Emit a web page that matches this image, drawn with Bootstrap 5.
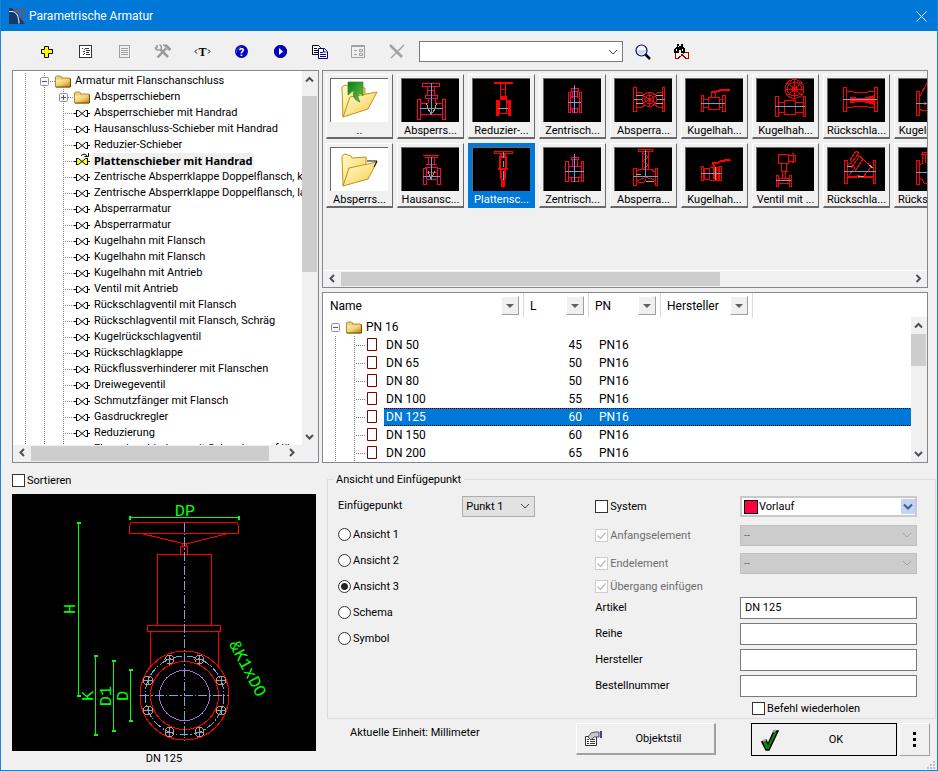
<!DOCTYPE html>
<html lang="de">
<head>
<meta charset="utf-8">
<meta name="viewport" content="width=device-width, initial-scale=1">
<title>Parametrische Armatur</title>
<link href="https://cdn.jsdelivr.net/npm/bootstrap@5.3.0/dist/css/bootstrap.min.css" rel="stylesheet">
<style>
  :root { --face: #f0f0f0; --accent: #0078d7; --thumb: #cdcdcd; --line: #828790; }
  body { font-family: Roboto, "Noto Sans", sans-serif; font-size: 11px; line-height: 16px; color: #000; background: var(--face); }
  button, input, select { font: inherit; color: inherit; }
  .window { border: 1px solid #1883d7; border-top: 0; background: var(--face); }
  .titlebar { height: 31px; background: var(--accent); font-size: 12px; padding: 0 0 0 8px; }
  .close-btn { width: 31px; height: 31px; padding: 0; border: 0; background: none; }
  .tool-row { height: 39px; padding-left: 26px; padding-top: 2px; }
  .tool-btn { width: 39px; height: 24px; padding: 0; border: 0; background: none; display: flex; align-items: center; justify-content: center; }
  .search-box { width: 204px; margin-left: 2px; }
  .form-select.win { height: 21px; padding: 0 20px 0 3px; font-size: 11px; line-height: 19px; color: #000; border: 1px solid #adadad; border-radius: 0; background-color: #e1e1e1;
    background-image: url("data:image/svg+xml,%3Csvg xmlns='http://www.w3.org/2000/svg' viewBox='0 0 10 10'%3E%3Cpath d='M1 3l4 4 4-4' fill='none' stroke='%23444'/%3E%3C/svg%3E"); background-size: 10px 10px; background-position: right 4px center; }
  .form-select.win.plain { background-color: #fff; border-color: #7a7a7a; }
  .form-select.win.point { width: 73px; }
  .form-select.win:disabled { background-color: #ccc; border-color: #bfbfbf; color: #6d6d6d;
    background-image: url("data:image/svg+xml,%3Csvg xmlns='http://www.w3.org/2000/svg' viewBox='0 0 10 10'%3E%3Cpath d='M1 3l4 4 4-4' fill='none' stroke='%23a0a0a0'/%3E%3C/svg%3E"); }
  .form-select.win.system { background-color: #fff; border: 2px solid #c9c9c9; padding-left: 17px; line-height: 17px; background-size: 14px 15px; background-position: right 0 center;
    background-image: url("data:image/svg+xml,%3Csvg xmlns='http://www.w3.org/2000/svg' viewBox='0 0 14 15'%3E%3Crect width='14' height='15' rx='1' fill='%23c1d3fb'/%3E%3Cpath d='M3 5.500l4 4 4-4' fill='none' stroke='%234d6185' stroke-width='2.200'/%3E%3C/svg%3E"); }
  .swatch { position: absolute; left: 4px; top: 4px; width: 14px; height: 14px; background: #ff0040; border: 1px solid #000; }
  .body-grid { display: grid; grid-template-columns: minmax(0, 1fr) minmax(0, 2fr); column-gap: 3px; padding-left: 11px; padding-right: 1px; min-height: 0; }
  .body-grid > section { min-height: 0; }
  .sunk { border: 1px solid var(--line); background: #fff; }
  .sunk.faced { background: var(--face); }

  /* scroll bars */
  .bar-v { width: 16px; background: var(--face); display: flex; flex-direction: column; }
  .bar-h { height: 17px; background: var(--face); display: flex; }
  .bar-v > i, .bar-h > i { background: var(--thumb); background-clip: content-box; }
  .bar-v > i { padding-right: 1px; }
  .bar-h > i { padding: 1px 0; }
  .bar-v > svg, .bar-h > svg { flex: none; }
  .chev { fill: none; stroke: #505050; stroke-width: 2; }

  /* navigation tree */
  .tree { list-style: none; margin: 0; padding: 2px 0 0; }
  .tree li { --dots-v: repeating-linear-gradient(#808080 0 1px, transparent 1px 2px); --dots-h: repeating-linear-gradient(90deg, #808080 0 1px, transparent 1px 2px);
    height: 16px; display: flex; align-items: center; white-space: nowrap; background-repeat: no-repeat; padding-left: 61px;
    background-image: var(--dots-v), var(--dots-v), var(--dots-v), var(--dots-h);
    background-size: 1px 100%, 1px 100%, 1px 100%, 9px 1px;
    background-position: 12px 0, 31px 0, 50px 0, 52px 8px; }
  .tree li.top { padding-left: 27px; background-size: 1px 100%, 1px 100%, 0 0, 5px 1px; background-position: 12px 0, 31px 0, 0 0, 37px 8px; }
  .tree li.sub { padding-left: 46px; background-position: 12px 0, 31px 0, 50px 0, 55px 8px; background-size: 1px 100%, 1px 100%, 1px 100%, 5px 1px; }
  .tree svg { flex: none; margin-right: 4px; }
  svg.twist, .tree svg.twist { margin-right: 6px; }
  .tree .current { font-family: "Noto Sans", sans-serif; font-weight: 700; background: #f0f0f0; padding: 0 2px; margin-left: -2px; height: 16px; }
  .sort-row { height: 31px; padding-top: 3px; }
  .preview { margin: 0 3px 3px 0; }

  /* preview tiles */
  .gallery { display: grid; grid-auto-flow: column; grid-template-rows: 65px 65px; grid-auto-columns: 67px; gap: 4px; padding: 3px 3px 62px; overflow: hidden; }
  .tile { border: 1px solid; border-width: 1px 1px 2px 1px; border-color: #fff #696969 #696969 #fff; background: var(--face); padding: 3px; text-align: center; white-space: nowrap; line-height: 15px; }
  .tile svg { display: block; width: 58px; height: 44px; background: #000; border-top: 1px solid #696969; border-left: 1px solid #696969; fill: none; stroke: #f00; margin-bottom: 1px; shape-rendering: crispEdges; }
  .tile svg.light { background: #fff; shape-rendering: auto; }
  .tile .crim { stroke: #ff0040; } .tile .axis { stroke: #6f9fd8; } .tile .tan { stroke: #d0a060; } .tile .solid { fill: #f00; }
  .tile.picked { background: var(--accent); border-color: var(--accent); color: #fff; }

  /* dimension table */
  .table-side { padding-left: 1px; }
  .sizes { width: 100%; table-layout: fixed; border-collapse: separate; border-spacing: 0; font-size: 12px; line-height: 16px; }
  .sizes th { height: 25px; font-weight: 400; padding: 0 4px 0 6px; border-right: 1px solid #dcdcdc; }
  .sizes th:last-child { border: 0; }
  .sizes td { height: 18px; padding: 0; }
  .sizes td.num { text-align: right; padding-right: 7px; }
  .sizes td.pn { padding-left: 10px; }
  .drop { width: 18px; height: 19px; padding: 0; border: 1px solid; border-color: #fff #a0a0a0 #a0a0a0 #fff; background: #f0f0f0; display: flex; align-items: center; justify-content: center; }
  .root-row { padding-left: 7px; }
  .twig { height: 18px; padding-left: 42px; display: flex; align-items: center; background-repeat: no-repeat;
    background-image: repeating-linear-gradient(#808080 0 1px, transparent 1px 2px), repeating-linear-gradient(#808080 0 1px, transparent 1px 2px), repeating-linear-gradient(90deg, #808080 0 1px, transparent 1px 2px);
    background-size: 1px 18px, 1px 18px, 10px 1px; background-position: 11px 0, 30px 0, 32px 9px; }
  .twig svg { flex: none; margin-right: 6px; }
  .twig span { flex: 1; padding-left: 2px; line-height: 18px; }
  .sizes .marked td, .sizes .marked .twig span { color: #fff; }
  .sizes .marked .twig span, .sizes .marked td + td { background: linear-gradient(90deg, #000 50%, transparent 0) 0 0/2px 1px repeat-x, linear-gradient(90deg, #000 50%, transparent 0) 0 100%/2px 1px repeat-x, var(--accent); }

  /* form */
  .group { border: 1px solid #dcdcdc; margin: 0 0 0 5px; padding: 11px 18px 1px 10px; position: relative; }
  .group > legend { position: absolute; top: -8px; left: 5px; width: auto; font-size: 11px; line-height: 16px; margin: 0; padding: 0 3px; background: var(--face); float: none; }
  .options { grid-template-rows: 30px; grid-auto-rows: 26px; display: grid; align-items: center; padding-right: 44px; }
  .fields { display: grid; grid-template-columns: 45% 55%; grid-template-rows: 30px 28px 28px 18px repeat(4, 26px) 18px; align-items: center; }
  .tick { display: flex; align-items: center; gap: 2px; }
  .tick label { padding-top: 1px; }
  .tick .form-check-input { width: 13px; height: 13px; margin: 0; border: 1px solid #333; border-radius: 0; background-color: #fff; box-shadow: none; flex: none; }
  .tick .form-check-input[type=radio] { border-radius: 50%; }
  .tick .form-check-input[type=radio]:checked { background-image: radial-gradient(circle, #222 0 3px, transparent 4px); }
  .tick .form-check-input:disabled { opacity: 1; border-color: #ccc; }
  .tick .form-check-input:disabled:checked { background-image: url("data:image/svg+xml,%3Csvg xmlns='http://www.w3.org/2000/svg' viewBox='0 0 11 11'%3E%3Cpath d='M1.500 5.500l3 3 5-6' fill='none' stroke='%23bbb' stroke-width='1.300'/%3E%3C/svg%3E"); }
  .tick .form-check-input:disabled ~ label { color: #6d6d6d; opacity: 1; }
  .form-control.win { height: 22px; border: 1px solid #7a7a7a; border-radius: 0; padding: 0 4px 1px; font-size: 11px; line-height: 16px; background: #fff; color: #000; }
  .unit { line-height: 20px; padding-left: 28px; }
  .win-btn { height: 32px; border: 1px solid; border-width: 1px 2px 2px 1px; border-color: #fff #a0a0a0 #a0a0a0 #fff; background: var(--face); padding: 0; display: flex; align-items: center; }
  .win-btn.style-btn { width: 140px; margin-right: 35px; }
  .win-btn.default { width: 146px; border: 1px solid #000; height: 33px; margin-right: 2px; }
  .win-btn.more { width: 31px; height: 33px; border-width: 1px; margin-right: 6px; }

  .drawing { display: block; width: 100%; max-height: 40vh; background: #000; fill: none; shape-rendering: crispEdges; }
  .drawing text { fill: #0f0; stroke: none; font-family: "Liberation Mono", monospace; font-size: 17px; text-anchor: middle; }
</style>
</head>
<body>
<svg width="0" height="0" class="position-absolute" aria-hidden="true">
  <defs>
    <linearGradient id="fold" x1="0" y1="0" x2="1" y2="1"><stop offset="0" stop-color="#fff0b0"/><stop offset=".5" stop-color="#f0cf70"/><stop offset="1" stop-color="#b87a08"/></linearGradient>
    <linearGradient id="bigfold" x1="0" y1="0" x2="1" y2="1"><stop offset="0" stop-color="#fffbd0"/><stop offset="1" stop-color="#f7cd4a"/></linearGradient>
    <linearGradient id="leafgreen" x1="0" y1="0" x2="1" y2="1"><stop offset="0" stop-color="#0d7a1c"/><stop offset="1" stop-color="#6cc644"/></linearGradient>
    <symbol id="valve" viewBox="0 1 16 16"><path d="M0 9.500h2M14 9.500h2M2.500 6v7M2.500 6.500h2l7 6h2v-6h-2l-7 6h-2M13.500 6v7" fill="none" stroke="#000"/></symbol>
    <symbol id="valve-on" viewBox="0 1 16 16"><path d="M2.500 6.500h2l4 3-4 3h-2zM13.500 6.500h-2l-3 3 3 3h2z" fill="#ff0"/><path d="M0 9.500h2M14 9.500h2M2.500 6v7M2.500 6.500h2l7 6h2v-6h-2l-7 6h-2M13.500 6v7M7 3.500q3-3 6 0M14.500 1v3.500h-4" fill="none" stroke="#000"/></symbol>
    <symbol id="folder" viewBox="0 0 16 12"><path d="M.5 11.500V1.500l1-1h4l1 1v1h8v9z" fill="#e9cf84" stroke="#b58a2a"/><path d="M1 4h14v7.500H1z" fill="url(#fold)"/><path d="M15.500 3v8.500H1" fill="none" stroke="#6e4a00"/></symbol>
    <symbol id="minus" viewBox="0 0 9 9"><rect x=".5" y=".5" width="8" height="8" rx="1" fill="#f6f6f6" stroke="#919191"/><path d="M2 4.500h5" stroke="#3c58b0"/></symbol>
    <symbol id="plus" viewBox="0 0 9 9"><rect x=".5" y=".5" width="8" height="8" rx="1" fill="#f6f6f6" stroke="#919191"/><path d="M2 4.500h5M4.500 2v5" stroke="#3c58b0"/></symbol>
    <symbol id="up" viewBox="0 0 16 16"><path class="chev" d="M4 10l3.500-3.500L11 10"/></symbol>
    <symbol id="down" viewBox="0 0 16 16"><path class="chev" d="M4 6.500l3.500 3.500L11 6.500"/></symbol>
    <symbol id="left" viewBox="0 0 16 16"><path class="chev" d="M10 4L6.500 7.500l3.500 3.500"/></symbol>
    <symbol id="right" viewBox="0 0 16 16"><path class="chev" d="M6 4l3.500 3.500L6 11"/></symbol>
    <symbol id="page" viewBox="0 0 12 14"><path d="M1.500.500h9v12h-9z" fill="#fff" stroke="#800000"/></symbol>
    <symbol id="caret" viewBox="0 0 8 4"><path d="M0 0h8L4 4z" fill="#606060"/></symbol>
  </defs>
</svg>

<div class="window vh-100 d-flex flex-column overflow-hidden">
  <header class="titlebar d-flex align-items-center text-white flex-shrink-0">
    <svg width="16" height="16" viewBox="0 0 16 16"><rect width="16" height="16" fill="#123a6c"/><path d="M3 0h13v16z" fill="#3a669a"/><path d="M0 3.500h3c4 0 7 5 7 12" fill="none" stroke="#fff"/></svg>
    <span class="ps-1">Parametrische Armatur</span>
    <button class="close-btn ms-auto" aria-label="Schließen"><svg width="11" height="11" viewBox="0 0 11 11"><path d="M.5.500l10 10M10.500.500l-10 10" stroke="#fff"/></svg></button>
  </header>

  <div class="tool-row d-flex align-items-center flex-shrink-0">
    <button class="tool-btn" aria-label="Neu"><svg width="12" height="12"><path d="M3.500.500h4v3h4v4h-4v4h-4v-4h-3v-4h3z" fill="#ff0" stroke="#000"/></svg></button>
    <button class="tool-btn" aria-label="Baum"><svg width="13" height="13" fill="none" stroke="#333"><rect x=".5" y=".5" width="12" height="12" fill="#fff"/><path d="M3 3.500h2M4 6.500h1M4 9.500h1M5.500 4v6" stroke-dasharray="1 1"/><path d="M6 3.500h4M7 5.500h4M7 7.500h3M7 9.500h4"/></svg></button>
    <button class="tool-btn" aria-label="Liste"><svg width="12" height="13" fill="none" stroke="#a0a0a0"><rect x=".5" y=".5" width="10" height="12"/><path d="M2 3.500h7M2 5.500h7M2 7.500h7M2 9.500h7"/><path d="M11.500 1v12" stroke="#fff"/></svg></button>
    <button class="tool-btn" aria-label="Werkzeuge"><svg width="17" height="15" viewBox="0 0 17 15" fill="none" stroke="#999"><path d="M2.500 13.500L11 4.500M13 13L5.500 5.500" stroke-width="2.500"/><path d="M8 1h4l4 4-2 1.500-5-5z" fill="#999" stroke-width="1"/><path d="M2 1v2.500h-2c1 3 4 3 5.500 2s1-4-1-5" stroke-width="1.500"/></svg></button>
    <button class="tool-btn" aria-label="Text"><svg width="17" height="13"><path d="M3 4.500l-2 2 2 2M14 4.500l2 2-2 2" fill="none" stroke="#000"/><text x="8.500" y="11" text-anchor="middle" font-family="Liberation Serif, serif" font-weight="700" font-size="12">T</text></svg></button>
    <button class="tool-btn" aria-label="Hilfe"><svg width="13" height="13"><circle cx="6.500" cy="6.500" r="6.500" fill="#0000b8"/><path d="M1.500 8a5 5 0 0 1 5-6" stroke="#55f" fill="none"/><text x="6.500" y="10.500" text-anchor="middle" font-weight="700" font-size="11" fill="#fff">?</text></svg></button>
    <button class="tool-btn" aria-label="Start"><svg width="13" height="13"><circle cx="6.500" cy="6.500" r="6.500" fill="#0000d0"/><circle cx="6.500" cy="6.500" r="6" fill="none" stroke="#000070"/><path d="M5 3l4 3.500L5 10z" fill="#fff"/></svg></button>
    <button class="tool-btn" aria-label="Kopieren"><svg width="16" height="14"><path d="M.5.500h6l2 2v7h-8z" fill="#fff" stroke="#000"/><path d="M2 3.500h3M2 5.500h4M2 7.500h4" stroke="#000"/><path d="M6.500 3.500h6l3 3v7h-9z" fill="#fff" stroke="#000080"/><path d="M8 7.500h3M8 9.500h6M8 11.500h6M11.500 4v3h3" stroke="#000080" fill="none"/></svg></button>
    <button class="tool-btn" aria-label="Eigenschaften"><svg width="15" height="13" fill="none" stroke="#a0a0a0"><path d="M.5.500h13v12H.5zM1 1.500h12"/><path d="M3 5.500h3M3 9.500h3M8.500 4.500h3v2h-3zM8.500 8.500h3v2h-3z"/></svg></button>
    <button class="tool-btn" aria-label="Löschen"><svg width="17" height="15" fill="none" stroke="#a0a0a0"><path d="M1 1l12 12" stroke-width="2.500"/><path d="M15 1L2 14" stroke-width="1.500"/><path d="M14 14l2-1" stroke="#fff"/></svg></button>
    <select class="form-select win plain search-box" aria-label="Suche"><option></option></select>
    <button class="tool-btn" aria-label="Suchen"><svg width="16" height="16"><path d="M10 10l5 5" stroke="#000" stroke-width="2.500"/><circle cx="6.500" cy="6.500" r="5.500" fill="#fff" stroke="#000080" stroke-width="1.200"/><path d="M2 6a4.500 4.500 0 0 0 9 0z" fill="#cfd8e4"/></svg></button>
    <button class="tool-btn" aria-label="Armatur suchen"><svg width="16" height="15" shape-rendering="crispEdges"><path d="M1.500 9v5h3l7-6h3v6h-3l-4-4" fill="none" stroke="#a00000"/><path d="M3 0h2v2h2V0h2v2l2 3v4H7V6H5v3H0V5l3-3z"/><path d="M2.500 5v2M8.500 5v2M4.500 2v1" stroke="#fff"/></svg></button>
  </div>

  <main class="body-grid flex-grow-1">
    <section class="d-flex flex-column">
      <div class="sunk d-flex flex-column flex-grow-1 overflow-hidden">
        <div class="d-flex flex-grow-1 overflow-hidden">
          <ul class="tree flex-grow-1 overflow-hidden">
            <li class="top"><svg width="9" height="9" class="twist"><use href="#minus"/></svg><svg width="16" height="13"><use href="#folder"/></svg>Armatur mit Flanschanschluss</li>
            <li class="sub"><svg width="9" height="9" class="twist"><use href="#plus"/></svg><svg width="16" height="13"><use href="#folder"/></svg>Absperrschiebern</li>
            <li><svg width="16" height="16"><use href="#valve"/></svg>Absperrschieber mit Handrad</li>
            <li><svg width="16" height="16"><use href="#valve"/></svg>Hausanschluss-Schieber mit Handrad</li>
            <li><svg width="16" height="16"><use href="#valve"/></svg>Reduzier-Schieber</li>
            <li><svg width="16" height="16"><use href="#valve-on"/></svg><span class="current">Plattenschieber mit Handrad</span></li>
            <li><svg width="16" height="16"><use href="#valve"/></svg>Zentrische Absperrklappe Doppelflansch, kurz</li>
            <li><svg width="16" height="16"><use href="#valve"/></svg>Zentrische Absperrklappe Doppelflansch, lang</li>
            <li><svg width="16" height="16"><use href="#valve"/></svg>Absperrarmatur</li>
            <li><svg width="16" height="16"><use href="#valve"/></svg>Absperrarmatur</li>
            <li><svg width="16" height="16"><use href="#valve"/></svg>Kugelhahn mit Flansch</li>
            <li><svg width="16" height="16"><use href="#valve"/></svg>Kugelhahn mit Flansch</li>
            <li><svg width="16" height="16"><use href="#valve"/></svg>Kugelhahn mit Antrieb</li>
            <li><svg width="16" height="16"><use href="#valve"/></svg>Ventil mit Antrieb</li>
            <li><svg width="16" height="16"><use href="#valve"/></svg>Rückschlagventil mit Flansch</li>
            <li><svg width="16" height="16"><use href="#valve"/></svg>Rückschlagventil mit Flansch, Schräg</li>
            <li><svg width="16" height="16"><use href="#valve"/></svg>Kugelrückschlagventil</li>
            <li><svg width="16" height="16"><use href="#valve"/></svg>Rückschlagklappe</li>
            <li><svg width="16" height="16"><use href="#valve"/></svg>Rückflussverhinderer mit Flanschen</li>
            <li><svg width="16" height="16"><use href="#valve"/></svg>Dreiwegeventil</li>
            <li><svg width="16" height="16"><use href="#valve"/></svg>Schmutzfänger mit Flansch</li>
            <li><svg width="16" height="16"><use href="#valve"/></svg>Gasdruckregler</li>
            <li><svg width="16" height="16"><use href="#valve"/></svg>Reduzierung</li>
            <li><svg width="16" height="16"><use href="#valve"/></svg>Flanschverbindung mit Schrauben auf längf</li>
          </ul>
          <div class="bar-v flex-shrink-0" aria-hidden="true"><svg width="16" height="17"><use href="#up"/></svg><i class="mt-2" style="height:47%"></i><svg class="mt-auto" width="16" height="17"><use href="#down"/></svg></div>
        </div>
        <div class="bar-h flex-shrink-0" aria-hidden="true"><svg width="18" height="16"><use href="#left"/></svg><i style="width:78%"></i><svg class="ms-auto me-3" width="20" height="16"><use href="#right"/></svg></div>
      </div>
      <div class="tick sort-row flex-shrink-0"><input class="form-check-input" type="checkbox" id="sort"><label for="sort">Sortieren</label></div>
      <figure class="preview flex-shrink-0">
        <svg class="drawing" viewBox="0 0 304 257" role="img" aria-label="Plattenschieber, Ansicht 3">
          <g stroke="#f00">
            <path d="M119.500 28.500h105l2 3v8h-109v-8zM131 40l40 9.500h5l38-9.500M170 50v2M174.500 50v2M168.500 60.500v-8h7v8M145.500 131.500v-71h54v71M135.500 131.500h73v6h-73zM138.500 137.500v35M206.500 137.500v35"/>
            <circle cx="172.500" cy="201.500" r="44.500"/><circle cx="172.500" cy="201.500" r="34"/>
          </g>
          <circle cx="172.500" cy="201.500" r="25" stroke="#a070d8"/>
          <g stroke="#6fa8dc" stroke-dasharray="9 2 1.500 2">
            <circle cx="172.500" cy="201.500" r="39.500"/><path d="M172.500 28.500v218M128 201.500h89"/>
          </g>
          <g stroke="#d8945a">
            <circle cx="187.500" cy="165.500" r="4.500"/><circle cx="209" cy="186.500" r="4.500"/><circle cx="209" cy="216.500" r="4.500"/><circle cx="187.500" cy="238" r="4.500"/>
            <circle cx="157.500" cy="165.500" r="4.500"/><circle cx="136" cy="186.500" r="4.500"/><circle cx="136" cy="216.500" r="4.500"/><circle cx="157.500" cy="238" r="4.500"/>
          </g>
          <path stroke="#6fa8dc" d="M184 165.500h7M187.500 162v7M205 186.500h8M209 183v7M205 216.500h8M209 213v7M184 238h7M187.500 234v8M154 165.500h7M157.500 162v7M132 186.500h8M136 183v7M132 216.500h8M136 213v7M154 238h7M157.500 234v8"/>
          <g stroke="#0f0">
            <path d="M117.500 23.500h109M66.500 28v174M83.500 162v79M101.500 167v70M118.500 176v51"/>
            <path stroke-width="2" d="M117.500 22v4M226.500 22v4M64.500 28.500h4M64.500 201.500h4M81.500 162h4M81.500 241h4M99.500 167h4M99.500 237h4M116.500 176h4M116.500 227h4"/>
          </g>
          <text x="173" y="22">DP</text>
          <text transform="translate(63 115) rotate(-90)">H</text>
          <text transform="translate(81 202) rotate(-90)">K</text>
          <text transform="translate(99 202) rotate(-90)">D1</text>
          <text transform="translate(116 202) rotate(-90)">D</text>
          <text transform="translate(231 177) rotate(62)">&amp;K1xDO</text>
        </svg>
        <figcaption class="text-center">DN 125</figcaption>
      </figure>
    </section>

    <section class="d-flex flex-column">
      <div class="sunk faced d-flex flex-column flex-shrink-0 me-2">
        <div class="gallery">
          <button class="tile"><svg class="light" viewBox="1 1 57 43"><path d="M12 9l3-2 6 2 14 1v14L13 39z" fill="url(#bigfold)" stroke="#c0921a"/><path d="M13 39l7-20 27-5-9 17z" fill="url(#bigfold)" stroke="#c0921a"/><path d="M18 4h15v14l-3-3q-4 3 0 9-9-3-6-12l-6 5z" fill="url(#leafgreen)" stroke="#2a8a2a" stroke-width=".7"/></svg>..</button>
          <button class="tile"><svg class="light" viewBox="1 1 57 43"><path d="M12 9l3-2 6 2 1 2 14-1v14L13 39z" fill="url(#bigfold)" stroke="#c0921a"/><path d="M13 39l6-18 28-6-9 17z" fill="url(#bigfold)" stroke="#c0921a"/><path d="M37 14h10l-3 6" fill="none" stroke="#000"/></svg>Absperrs...</button>

          <button class="tile"><svg viewBox="1 1 57 43"><path class="crim" d="M21.500 5.500h17v2.500h-17zM26.500 8v9M33.500 8v9M27 12h6M24.500 17.500h12v2.500h-12zM27 20v5M34 20v5M16.500 21.500h2.500v20h-2.500zM41.500 21.500h2.500v20h-2.500zM19 25.500h8M34 25.500h8M19 36.500h23"/><path class="tan" d="M25.500 25l2 7 3 4 3-4 2-7"/><path class="axis" d="M30.500 5v32M19 30.500h23"/></svg>Absperrs...</button>
          <button class="tile"><svg viewBox="1 1 57 43"><path class="crim" d="M22 8.500h16M24 10h13M27.500 11v7M33.500 11v7M25 17.500h11M24 20.500h13M22.500 21.500h3v16h-3zM36 21.500h3v16h-3zM26 25h10M26 32.500h10"/><path class="tan" d="M27 24l3 8 4-8"/><path class="axis" d="M30.500 10v23M22 29.500h17"/></svg>Hausansc...</button>

          <button class="tile"><svg viewBox="1 1 57 43"><path class="solid" d="M22 4.500h18v1h-18zM28.500 18.500h6v3h-6zM24.500 22h1.500v15h-1.500zM36.500 22h1.500v15h-1.500z"/><path d="M28.500 6v12M33.500 6v12M29 11h4M26 25l3-4h5l2 4M27.500 23v13M34.500 23v13M26 35.500h10"/><path class="axis" d="M26 30.500h10"/></svg>Reduzier-...</button>
          <button class="tile picked"><svg viewBox="1 1 57 43"><path d="M22.500 4.500h18v2h-18z"/><path d="M28 9v13M33.500 9v13M27 9.500h7M29 7v4M33 7v4M25.500 21.500h10M28.500 23v9M33 23v9" stroke-width="2"/><path class="solid" d="M29.500 32h3v7h-3z"/><path class="axis" d="M31 5v6M31 14v6M31 24v9"/></svg>Plattensc...</button>

          <button class="tile"><svg viewBox="1 1 57 43"><path class="crim" d="M25.500 14.500h2v20h-2zM36 14.500h2v20h-2zM28 10.500h7v3h-7zM29 14v6M34 14v6M28 18.500h7M28 30.500h7M29 30v4h5v-4"/><path class="axis" d="M31.500 7v28M25 24.500h13"/></svg>Zentrisch...</button>
          <button class="tile"><svg viewBox="1 1 57 43"><path class="crim" d="M22.500 14.500h2.500v20h-2.500zM38 14.500h2.500v20h-2.500zM28 10.500h7v2h-7zM29 13v6M34 13v6M25 19.500h13M25 30.500h13M28 31v3h7v-3"/><path class="axis" d="M31.500 7v28M22 24.500h19"/></svg>Zentrisch...</button>

          <button class="tile"><svg viewBox="1 1 57 43"><path d="M19.500 9.500h3v24h-3zM48 9.500h2.500v24h-2.500zM23 14h4l3 3M48 14h-4l-3 3M23 29h5l3-2M48 29h-4l-3-2M35.500 14v15M29 18l13 7M29 25l13-7"/><circle cx="35.500" cy="21.500" r="7"/><circle cx="35.500" cy="21.500" r="4.500"/><path class="tan" d="M22 17l7 1M22 26l7-1M49 17l-7 1M49 26l-7-1"/><path class="axis" d="M20 21.500h8M43 21.500h8"/></svg>Absperra...</button>
          <button class="tile"><svg viewBox="1 1 57 43"><path d="M24.500 2.500h14v2h-14zM28.500 5v18M34.500 5v18M28 6l7 4-7 4 7 4-7 4M26 22.500h11M19.500 21.500h2.500v17h-2.500zM41 21.500h2.500v17h-2.500zM22 25l4-3M22 35q10-8 20-1M37 22l4 3M24 35q6 3 8-3"/><path class="tan" d="M32 35l8-1M22 27h5"/><path class="axis" d="M31.500 3v27M19 29.500h25"/></svg>Absperra...</button>

          <button class="tile"><svg viewBox="1 1 57 43"><path d="M16.500 17.500h2v16h-2zM37.500 17.500h2.500v16h-2.500zM19 21.500h4v-2h11v2h4M19 29.500h4v2h11v-2h4M23 20v11M34 20v11M26.500 20v-6h4v6"/><path d="M26 13.500h6l5-2h8" stroke-width="2"/><path class="axis" d="M16 25.500h24"/></svg>Kugelhah...</button>
          <button class="tile"><svg viewBox="1 1 57 43"><path d="M16.500 19.500h2v14h-2zM34 19.500h2v14h-2zM19 21.500h5v11h-5zM25 20h8v13h-8M28 20l1-5"/><path d="M29 32V18M31 33V20M27.500 18v-2h4l5-2 9-1.500" stroke-width="2"/><path class="tan" d="M30.500 20v13"/><path class="axis" d="M16 26.500h20"/></svg>Kugelhah...</button>

          <button class="tile"><svg viewBox="1 1 57 43"><circle cx="38.500" cy="11" r="9.500"/><circle cx="38.500" cy="11" r="7"/><circle cx="38.500" cy="11" r="2"/><path d="M38.500 2v18M30 11h17M32 5l13 12M45 5L32 17M19.500 18.500h2.500v20h-2.500zM47 18.500h2.500v20h-2.500zM22 24h6v-2h11v2h8M22 34h6v2h11v-2h8M28.500 22v14M39.500 22v14"/><path class="axis" d="M19 28.500h30"/></svg>Kugelhah...</button>
          <button class="tile"><svg viewBox="1 1 57 43"><path d="M22.500 7.500h10v9h-10zM33 8.500h6v6h-6M35.500 6.500h2v9h-2M25.500 17v7h5v-7M24.500 24.500h7M26.500 25v6M29.500 25v6M20.500 28.500h2v11h-2zM33.500 28.500h2v11h-2zM23 31h10M23 36.500h10"/><path class="axis" d="M20 33.500h15"/></svg>Ventil mit ...</button>

          <button class="tile"><svg viewBox="1 1 57 43"><path d="M16.500 9.500h3v24h-3zM47.500 9.500h3v24h-3zM20 13q14 3 27 0M20 30q14-3 27 0"/><path class="solid" d="M23 19l11 2 12-3v8l-12-3-11 2z"/><path class="axis" d="M16 21.500h34"/></svg>Rückschla...</button>
          <button class="tile"><svg viewBox="1 1 57 43"><path d="M17.500 13.500h2.500v23h-2.500zM46 13.500h2.500v23h-2.500zM20 18l4-2 4 5-6 7M23 13l6-9 3 2-7 9zM30 7l16 14M32 10l-8 11M36 12l-8 12M20 29l10 0M46 29l-10 0M20 31q13-1 26 0M30 28l6 2 8-10"/><path class="tan" d="M20 19h5M42 18l4 3M31 29h6"/><path class="axis" d="M17 24.500h32"/></svg>Rückschla...</button>

          <button class="tile"><svg viewBox="1 1 57 43"><path d="M18.500 13.500h2.500v24h-2.500zM21 20l8-15M21 31q5 3 14 1M28 5h16M30 5v5"/><circle cx="27" cy="25.500" r="1"/><path class="axis" d="M18 25.500h26"/></svg>Kugelrück...</button>
          <button class="tile"><svg viewBox="1 1 57 43"><path d="M18.500 13.500h2.500v24h-2.500zM24.500 17V5.500h16M23 7.500h16M21 18l4-2M21 31q4 1 5 5h14M27 8v8"/><path class="axis" d="M18 25.500h26"/></svg>Rückschla...</button>
        </div>
        <div class="bar-h border-top border-white" aria-hidden="true"><svg width="18" height="16"><use href="#left"/></svg><i style="width:62.7%"></i><svg class="ms-auto" width="17" height="16"><use href="#right"/></svg></div>
      </div>

      <div class="sunk d-flex mt-1 me-2 flex-shrink-0 overflow-hidden">
        <div class="table-side flex-grow-1">
          <table class="sizes">
            <colgroup><col style="width:200px"><col style="width:65px"><col style="width:72px"><col style="width:92px"><col></colgroup>
            <thead><tr>
              <th><div class="d-flex justify-content-between align-items-center">Name<button class="drop" aria-label="Name filtern"><svg width="8" height="4"><use href="#caret"/></svg></button></div></th>
              <th><div class="d-flex justify-content-between align-items-center">L<button class="drop" aria-label="L filtern"><svg width="8" height="4"><use href="#caret"/></svg></button></div></th>
              <th><div class="d-flex justify-content-between align-items-center">PN<button class="drop" aria-label="PN filtern"><svg width="8" height="4"><use href="#caret"/></svg></button></div></th>
              <th><div class="d-flex justify-content-between align-items-center">Hersteller<button class="drop" aria-label="Hersteller filtern"><svg width="8" height="4"><use href="#caret"/></svg></button></div></th>
              <th></th>
            </tr></thead>
            <tbody>
              <tr><td colspan="5"><div class="root-row d-flex align-items-center"><svg width="9" height="9" class="twist"><use href="#minus"/></svg><svg width="16" height="13" class="me-1"><use href="#folder"/></svg><span>PN 16</span></div></td></tr>
              <tr><td><div class="twig"><svg width="12" height="14"><use href="#page"/></svg><span>DN 50</span></div></td><td class="num">45</td><td class="pn">PN16</td><td></td><td></td></tr>
              <tr><td><div class="twig"><svg width="12" height="14"><use href="#page"/></svg><span>DN 65</span></div></td><td class="num">50</td><td class="pn">PN16</td><td></td><td></td></tr>
              <tr><td><div class="twig"><svg width="12" height="14"><use href="#page"/></svg><span>DN 80</span></div></td><td class="num">50</td><td class="pn">PN16</td><td></td><td></td></tr>
              <tr><td><div class="twig"><svg width="12" height="14"><use href="#page"/></svg><span>DN 100</span></div></td><td class="num">55</td><td class="pn">PN16</td><td></td><td></td></tr>
              <tr class="marked"><td><div class="twig"><svg width="12" height="14"><use href="#page"/></svg><span>DN 125</span></div></td><td class="num">60</td><td class="pn">PN16</td><td></td><td></td></tr>
              <tr><td><div class="twig"><svg width="12" height="14"><use href="#page"/></svg><span>DN 150</span></div></td><td class="num">60</td><td class="pn">PN16</td><td></td><td></td></tr>
              <tr><td><div class="twig"><svg width="12" height="14"><use href="#page"/></svg><span>DN 200</span></div></td><td class="num">65</td><td class="pn">PN16</td><td></td><td></td></tr>
            </tbody>
          </table>
        </div>
        <div class="d-flex flex-column pt-4" aria-hidden="true"><div class="bar-v flex-grow-1"><svg width="16" height="17"><use href="#up"/></svg><i style="height:22%"></i><svg class="mt-auto" width="16" height="17"><use href="#down"/></svg></div></div>
      </div>

      <fieldset class="group mt-3">
        <legend>Ansicht und Einfügepunkt</legend>
        <div class="row g-0">
          <div class="col-5"><div class="options">
            <div class="d-flex justify-content-between align-items-center"><label for="punkt">Einfügepunkt</label><select class="form-select win point" id="punkt"><option>Punkt 1</option></select></div>
            <div class="tick"><input class="form-check-input" type="radio" name="view" id="v1"><label for="v1">Ansicht 1</label></div>
            <div class="tick"><input class="form-check-input" type="radio" name="view" id="v2"><label for="v2">Ansicht 2</label></div>
            <div class="tick"><input class="form-check-input" type="radio" name="view" id="v3" checked><label for="v3">Ansicht 3</label></div>
            <div class="tick"><input class="form-check-input" type="radio" name="view" id="v4"><label for="v4">Schema</label></div>
            <div class="tick"><input class="form-check-input" type="radio" name="view" id="v5"><label for="v5">Symbol</label></div>
          </div></div>
          <div class="col-7 ps-3"><div class="fields">
            <div class="tick"><input class="form-check-input" type="checkbox" id="sys"><label for="sys">System</label></div>
            <div class="position-relative"><select class="form-select win system" aria-label="System"><option>Vorlauf</option></select><span class="swatch"></span></div>
            <div class="tick"><input class="form-check-input" type="checkbox" id="anf" checked disabled><label for="anf">Anfangselement</label></div>
            <select class="form-select win" disabled aria-label="Anfangselement"><option>--</option></select>
            <div class="tick"><input class="form-check-input" type="checkbox" id="end" checked disabled><label for="end">Endelement</label></div>
            <select class="form-select win" disabled aria-label="Endelement"><option>--</option></select>
            <div class="tick"><input class="form-check-input" type="checkbox" id="ueb" checked disabled><label for="ueb">Übergang einfügen</label></div><div></div>
            <label for="art">Artikel</label><input class="form-control win" id="art" value="DN 125">
            <label for="rei">Reihe</label><input class="form-control win" id="rei">
            <label for="her">Hersteller</label><input class="form-control win" id="her">
            <label for="bes">Bestellnummer</label><input class="form-control win" id="bes">
            <div></div><div class="tick ps-2 ms-1"><input class="form-check-input" type="checkbox" id="rep"><label for="rep">Befehl wiederholen</label></div>
          </div></div>
        </div>
      </fieldset>

      <footer class="d-flex mt-1 align-items-start">
        <span class="flex-grow-1 unit">Aktuelle Einheit: Millimeter</span>
        <button class="win-btn style-btn"><svg class="ms-2" width="18" height="16" viewBox="0 0 18 16"><path d="M.5 5.500h11v9H.5z" fill="#fff" stroke="#333"/><path d="M2 8.500h2M5 8.500h5M2 10.500h2M5 10.500h5M2 12.500h2M5 12.500h5" stroke="#333"/><path d="M3 6l3-4 4-1h4v5H9L6 9z" fill="#c8c8c8" stroke="#555"/><path d="M15 0h2v7h-2z" fill="#4040a0"/></svg><span class="flex-grow-1 text-center">Objektstil</span></button>
        <button class="win-btn default"><svg class="ms-2" width="20" height="22" viewBox="0 0 20 22"><path d="M2 13l4-2 2 4 6-13h4L9 21H6z" fill="#0a8a0a" stroke="#000" stroke-width="1.500"/><path d="M3 12l3-1M13 3l3-2" stroke="#aaa" stroke-width="2"/></svg><span class="flex-grow-1 text-center pe-1">OK</span></button>
        <button class="win-btn more justify-content-center" aria-label="Mehr"><svg width="3" height="15"><path d="M0 0h3v3H0zM0 6h3v3H0zM0 12h3v3H0z"/></svg></button>
      </footer>
      <svg class="ms-auto mt-auto" width="9" height="9"><path d="M6 0h2v2H6zM6 3h2v2H6zM6 6h2v2H6zM3 3h2v2H3zM3 6h2v2H3zM0 6h2v2H0z" fill="#bfbfbf"/></svg>
    </section>
  </main>
</div>
<script src="https://cdn.jsdelivr.net/npm/bootstrap@5.3.0/dist/js/bootstrap.bundle.min.js"></script>
</body>
</html>
